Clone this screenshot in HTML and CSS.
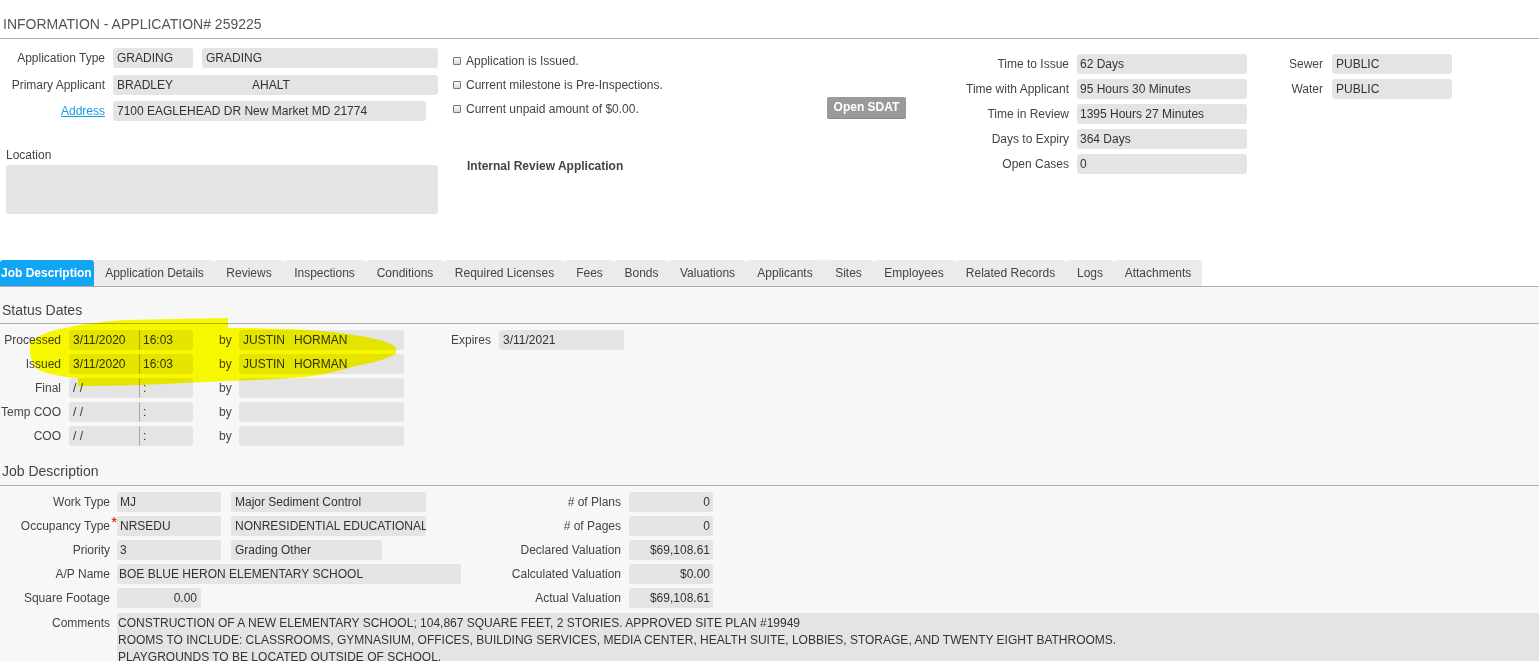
FILE: index.html
```html
<!DOCTYPE html>
<html>
<head>
<meta charset="utf-8">
<title>Information - Application# 259225</title>
<link rel="stylesheet" href="styles.css">
</head>
<body>
<div class="page">
  <div class="title">INFORMATION - APPLICATION# 259225</div>

  <div class="top">
    <div class="col-left">
      <div class="frow">
        <span class="lbl lbl-top">Application Type</span>
        <span class="fld w80">GRADING</span>
        <span class="fld w236 ml9">GRADING</span>
      </div>
      <div class="frow r2">
        <span class="lbl lbl-top">Primary Applicant</span>
        <span class="fld w135 join-l">BRADLEY</span>
        <span class="fld w190 join-r">AHALT</span>
      </div>
      <div class="frow r3">
        <span class="lbl lbl-top"><a class="link" href="#">Address</a></span>
        <span class="fld w313">7100 EAGLEHEAD DR New Market MD 21774</span>
      </div>
      <div class="loc-lbl">Location</div>
      <div class="loc-box"></div>
    </div>

    <div class="col-mid">
      <div class="checks">
        <div class="checklist">
          <div class="chk"><span class="box"></span>Application is Issued.</div>
          <div class="chk"><span class="box"></span>Current milestone is Pre-Inspections.</div>
          <div class="chk"><span class="box"></span>Current unpaid amount of $0.00.</div>
        </div>
        <div class="btn">Open SDAT</div>
      </div>
      <div class="internal">Internal Review Application</div>
    </div>

    <div class="col-right">
      <div class="frow"><span class="lbl lbl-r">Time to Issue</span><span class="fld w170">62 Days</span></div>
      <div class="frow g5"><span class="lbl lbl-r">Time with Applicant</span><span class="fld w170">95 Hours 30 Minutes</span></div>
      <div class="frow g5"><span class="lbl lbl-r">Time in Review</span><span class="fld w170">1395 Hours 27 Minutes</span></div>
      <div class="frow g5"><span class="lbl lbl-r">Days to Expiry</span><span class="fld w170">364 Days</span></div>
      <div class="frow g5"><span class="lbl lbl-r">Open Cases</span><span class="fld w170">0</span></div>
    </div>

    <div class="col-sew">
      <div class="frow"><span class="lbl lbl-s">Sewer</span><span class="fld w120">PUBLIC</span></div>
      <div class="frow g5"><span class="lbl lbl-s">Water</span><span class="fld w120">PUBLIC</span></div>
    </div>
  </div>

  <div class="tabs">
    <div class="tab active">Job Description</div>
    <div class="tab">Application Details</div>
    <div class="tab">Reviews</div>
    <div class="tab">Inspections</div>
    <div class="tab">Conditions</div>
    <div class="tab">Required Licenses</div>
    <div class="tab">Fees</div>
    <div class="tab">Bonds</div>
    <div class="tab">Valuations</div>
    <div class="tab">Applicants</div>
    <div class="tab">Sites</div>
    <div class="tab">Employees</div>
    <div class="tab">Related Records</div>
    <div class="tab">Logs</div>
    <div class="tab">Attachments</div>
  </div>

  <div class="content">
    <div class="sec-h">Status Dates</div>
    <div class="status">
      <div class="frow">
        <span class="lbl lbl-st">Processed</span>
        <span class="fld date">3/11/2020</span><span class="fld time">16:03</span>
        <span class="by">by</span>
        <span class="fld byf"><span class="fn">JUSTIN</span>HORMAN</span>
        <span class="lbl lbl-exp">Expires</span>
        <span class="fld w125">3/11/2021</span>
      </div>
      <div class="frow g4">
        <span class="lbl lbl-st">Issued</span>
        <span class="fld date">3/11/2020</span><span class="fld time">16:03</span>
        <span class="by">by</span>
        <span class="fld byf"><span class="fn">JUSTIN</span>HORMAN</span>
      </div>
      <div class="frow g4">
        <span class="lbl lbl-st">Final</span>
        <span class="fld date">/ /</span><span class="fld time">:</span>
        <span class="by">by</span>
        <span class="fld byf"></span>
      </div>
      <div class="frow g4">
        <span class="lbl lbl-st">Temp COO</span>
        <span class="fld date">/ /</span><span class="fld time">:</span>
        <span class="by">by</span>
        <span class="fld byf"></span>
      </div>
      <div class="frow g4">
        <span class="lbl lbl-st">COO</span>
        <span class="fld date">/ /</span><span class="fld time">:</span>
        <span class="by">by</span>
        <span class="fld byf"></span>
      </div>
    </div>

    <div class="sec-h sec-h2">Job Description</div>
    <div class="job">
      <div class="frow">
        <div class="jleft">
          <span class="lbl lbl-j">Work Type</span>
          <span class="fld w104">MJ</span>
          <span class="fld w195 ml10">Major Sediment Control</span>
        </div>
        <span class="lbl lbl-jr">#&nbsp;of Plans</span>
        <span class="fld num">0</span>
      </div>
      <div class="frow g4">
        <div class="jleft">
          <span class="lbl lbl-j req">Occupancy Type<span class="star">*</span></span>
          <span class="fld w104">NRSEDU</span>
          <span class="fld w195 ml10">NONRESIDENTIAL EDUCATIONAL</span>
        </div>
        <span class="lbl lbl-jr">#&nbsp;of Pages</span>
        <span class="fld num">0</span>
      </div>
      <div class="frow g4">
        <div class="jleft">
          <span class="lbl lbl-j">Priority</span>
          <span class="fld w104">3</span>
          <span class="fld w151 ml10">Grading Other</span>
        </div>
        <span class="lbl lbl-jr">Declared Valuation</span>
        <span class="fld num">$69,108.61</span>
      </div>
      <div class="frow g4">
        <div class="jleft">
          <span class="lbl lbl-j">A/P Name</span>
          <span class="fld w344">BOE BLUE HERON ELEMENTARY SCHOOL</span>
        </div>
        <span class="lbl lbl-jr">Calculated Valuation</span>
        <span class="fld num">$0.00</span>
      </div>
      <div class="frow g4">
        <div class="jleft">
          <span class="lbl lbl-j">Square Footage</span>
          <span class="fld w84 right">0.00</span>
        </div>
        <span class="lbl lbl-jr">Actual Valuation</span>
        <span class="fld num">$69,108.61</span>
      </div>
      <div class="crow">
        <span class="lbl lbl-j clbl">Comments</span>
        <div class="comments">CONSTRUCTION OF A NEW ELEMENTARY SCHOOL; 104,867 SQUARE FEET, 2 STORIES. APPROVED SITE PLAN #19949<br>ROOMS TO INCLUDE: CLASSROOMS, GYMNASIUM, OFFICES, BUILDING SERVICES, MEDIA CENTER, HEALTH SUITE, LOBBIES, STORAGE, AND TWENTY EIGHT BATHROOMS.<br>PLAYGROUNDS TO BE LOCATED OUTSIDE OF SCHOOL.</div>
      </div>
    </div>
  </div>

  <svg class="highlight" width="420" height="100" viewBox="0 0 420 100" aria-hidden="true">
    <path d="M30,43 C38,34 54,30 70,27 C90,23 110,21 124,20 L228,18 L228,28 C262,28 300,29 322,31 C362,35 392,41 396,48 L396,54 C387,59 372,63 356,66 C341,70 331,73 320,75 C290,79 260,80 228,81 L183,83 C150,85 120,86 78,86 L78,78 C60,77 44,73 37,69 C31,64 29,51 30,43 Z" fill="#ffff00"/>
  </svg>
</div>
</body>
</html>
```

FILE: styles.css
```css
* { box-sizing: border-box; }
html, body { margin: 0; padding: 0; }
body {
  font-family: "Liberation Sans", Arial, sans-serif;
  font-size: 12px;
  color: #333;
  background: #fff;
}
.page {
  position: relative;
  height: 661px;
  overflow: hidden;
  display: flex;
  flex-direction: column;
}
.title {
  flex-shrink: 0;
  height: 39px;
  font-size: 14px;
  line-height: 16px;
  color: #555;
  padding: 16px 3px 6px;
  border-bottom: 1px solid #adadad;
}

/* generic field rows */
.frow { display: flex; align-items: center; height: 20px; }
.g4 { margin-top: 4px; }
.g5 { margin-top: 5px; }
.lbl {
  flex-shrink: 0;
  text-align: right;
  color: #444;
  line-height: 14px;
  white-space: nowrap;
}
.fld {
  flex-shrink: 0;
  display: block;
  height: 20px;
  line-height: 20px;
  padding: 0 4px;
  background: #e4e4e4;
  border-radius: 3px;
  color: #333;
  white-space: nowrap;
  overflow: hidden;
}
.right { text-align: right; }
.ml9 { margin-left: 9px; }
.ml10 { margin-left: 10px; }
.w80 { width: 80px; }
.w84 { width: 84px; }
.w104 { width: 104px; padding-left: 3px; }
.w120 { width: 120px; }
.w125 { width: 125px; }
.w135 { width: 135px; }
.w151 { width: 151px; }
.w170 { width: 170px; padding-left: 3px; }
.w190 { width: 190px; }
.w195 { width: 195px; }
.w236 { width: 236px; }
.w313 { width: 313px; }
.w344 { width: 344px; padding-left: 2px; }
.join-l { border-radius: 3px 0 0 3px; }
.join-r { border-radius: 0 3px 3px 0; }

/* top area */
.top { display: flex; height: 221px; flex-shrink: 0; }
.col-left { width: 440px; padding-top: 9px; }
.r2 { margin-top: 7px; }
.r3 { margin-top: 6px; }
.lbl-top { width: 105px; margin-right: 8px; }
.link { color: #1a9be6; text-decoration: underline; }
.loc-lbl {
  margin-top: 27px;
  padding-left: 6px;
  line-height: 14px;
  color: #444;
}
.loc-box {
  margin: 3px 0 0 6px;
  width: 432px;
  height: 49px;
  background: #e4e4e4;
  border-radius: 3px;
}

.col-mid { margin-left: 13px; width: 507px; padding-top: 15px; }
.checks { display: flex; align-items: flex-start; }
.checklist { width: 374px; }
.chk {
  display: flex;
  align-items: center;
  height: 14px;
  line-height: 14px;
  color: #444;
}
.chk + .chk { margin-top: 10px; }
.box {
  width: 8px;
  height: 8px;
  margin-right: 5px;
  border: 1px solid #777;
  border-radius: 1px;
  background: linear-gradient(#fafafa, #d8d8d8);
}
.btn {
  margin-top: 43px;
  width: 79px;
  height: 21px;
  line-height: 21px;
  text-align: center;
  background: #9a9a9a;
  color: #fff;
  font-weight: bold;
  border-radius: 2px;
  box-shadow: 0 1px 0 #888;
}
.internal {
  margin-top: 41px;
  padding-left: 14px;
  line-height: 14px;
  font-weight: bold;
  color: #444;
}

.col-right { padding-top: 15px; }
.lbl-r { width: 109px; margin-right: 8px; }
.col-sew { margin-left: 16px; padding-top: 15px; }
.lbl-s { width: 60px; margin-right: 9px; }

/* tabs */
.tabs {
  flex-shrink: 0;
  display: grid;
  grid-template-columns: 94px 121px 68px 83px 78px 121px 49px 55px 77px 78px 49px 82px 111px 48px 88px;
  height: 27px;
  border-bottom: 1px solid #adadad;
}
.tab {
  height: 26px;
  line-height: 26px;
  text-align: center;
  white-space: nowrap;
  background: #ebebeb;
  color: #444;
  border-radius: 3px 3px 0 0;
}
.tab.active {
  background: #12a5f4;
  color: #fff;
  font-weight: bold;
  text-align: left;
  padding-left: 1px;
}

/* content */
.content { flex: 1; background: #f7f7f7; }
.sec-h {
  font-size: 14px;
  line-height: 16px;
  color: #444;
  padding: 15px 2px 5px;
  border-bottom: 1px solid #adadad;
}
.sec-h2 { padding-top: 17px; padding-bottom: 6px; }

.status { padding-top: 6px; }
.lbl-st { width: 61px; margin-right: 8px; }
.date { width: 70px; border-radius: 3px 0 0 3px; }
.time {
  width: 54px;
  border-left: 1px solid #a9a9a9;
  border-radius: 0 3px 3px 0;
  padding-left: 3px;
}
.by { width: 46px; padding-left: 26px; color: #444; line-height: 14px; }
.byf { width: 165px; }
.fn { display: inline-block; width: 51px; }
.lbl-exp { width: 87px; margin-right: 8px; }

.job { padding-top: 6px; }
.jleft { display: flex; align-items: center; width: 470px; flex-shrink: 0; }
.lbl-j { width: 110px; margin-right: 7px; }
.req { position: relative; }
.star {
  position: absolute;
  right: -7px;
  top: -5px;
  color: #d40000;
  font-size: 15px;
  line-height: 15px;
}
.lbl-jr { width: 151px; margin-right: 8px; }
.num { width: 84px; text-align: right; padding-right: 3px; }
.crow { display: flex; align-items: flex-start; margin-top: 5px; }
.clbl { line-height: 17px; padding-top: 2px; }
.comments {
  flex: 1;
  min-height: 80px;
  background: #e4e4e4;
  border-radius: 3px 0 0 3px;
  padding: 2px 0 0 1px;
  line-height: 17px;
  color: #333;
  white-space: nowrap;
}

/* hand-drawn annotation over the status rows */
.highlight {
  position: absolute;
  left: 0;
  top: 300px;
  pointer-events: none;
  mix-blend-mode: multiply;
}
```
